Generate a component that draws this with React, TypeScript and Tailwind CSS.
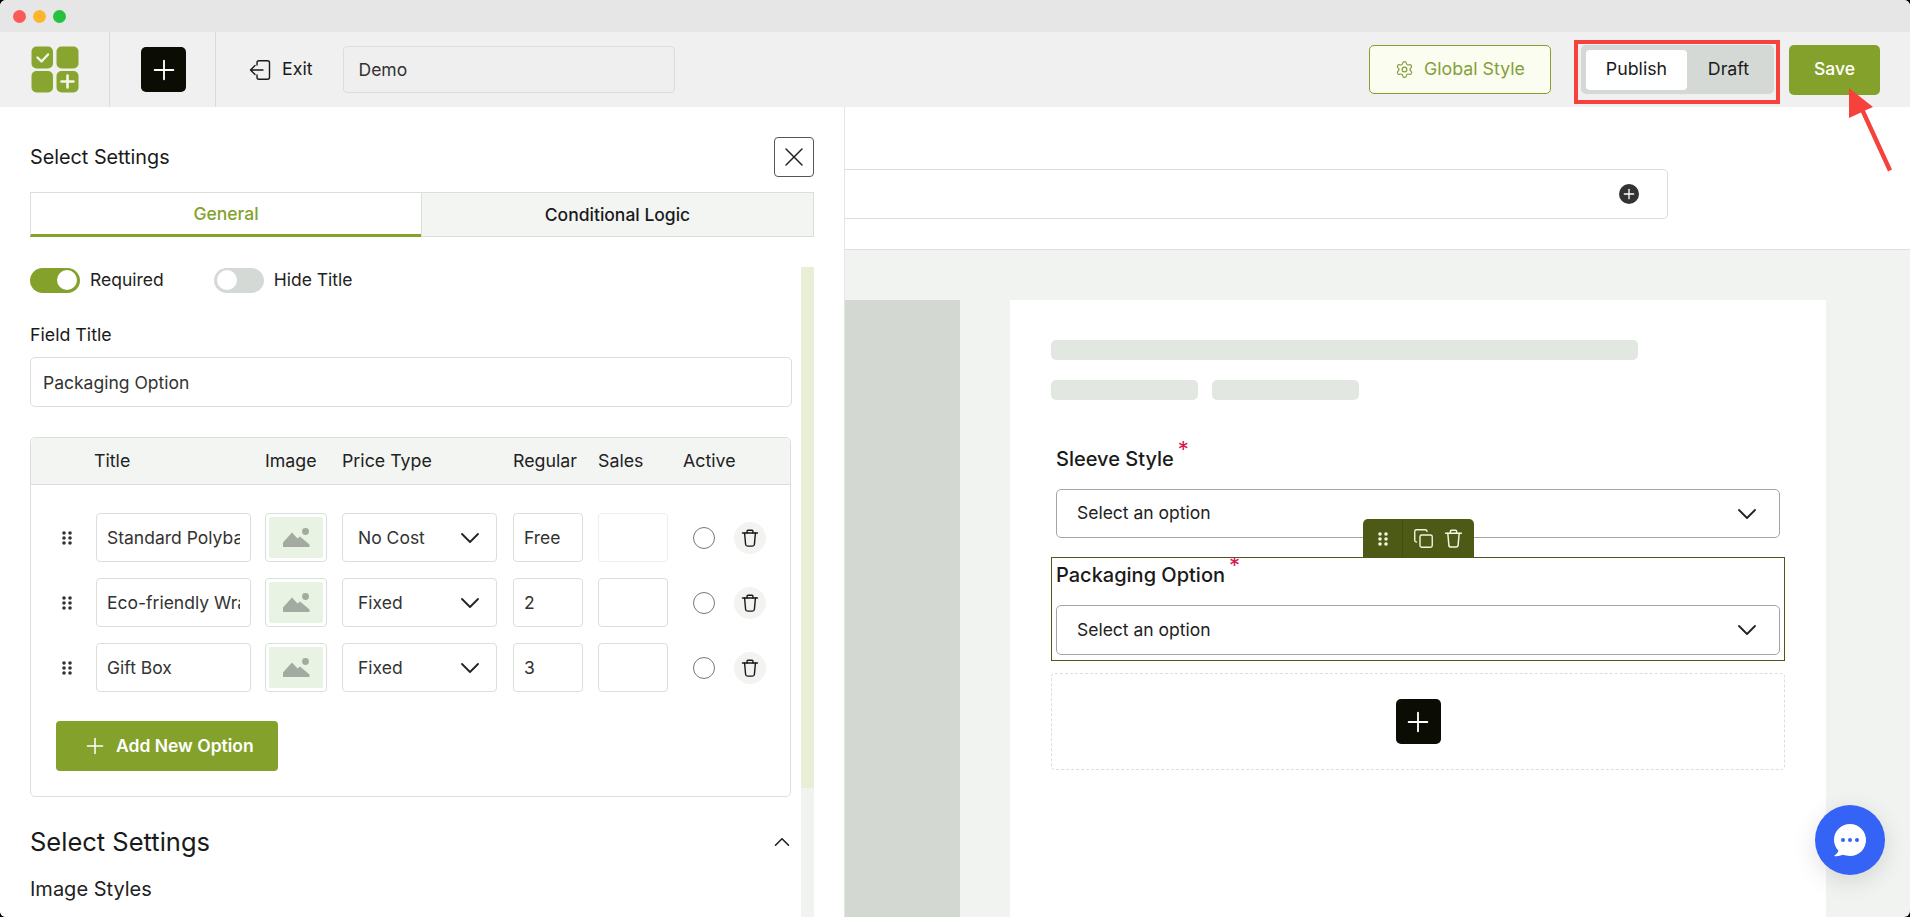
import React from "react";
import { Plus, X, Settings, Copy, ChevronUp } from "lucide-react";

const Chevron = () => (
  <svg width="18" height="10" viewBox="0 0 18 10" fill="none" stroke="#222" strokeWidth="1.8" strokeLinecap="round" strokeLinejoin="round">
    <path d="M1 1l8 8 8-8" />
  </svg>
);

const Grip = ({ color = "#333" }: { color?: string }) => (
  <svg width="10" height="14" viewBox="0 0 10 14" fill={color}>
    {[2, 8].map((x) =>
      [2, 7, 12].map((y) => <circle key={`${x}${y}`} cx={x} cy={y} r="1.8" />)
    )}
  </svg>
);

const Trash = ({ color = "#1a1a1a", size = 20 }: { color?: string; size?: number }) => (
  <svg width={size} height={size} viewBox="0 0 24 24" fill="none" stroke={color} strokeWidth="1.7" strokeLinecap="round" strokeLinejoin="round">
    <path d="M3 6h18" />
    <path d="M8.5 6V3.6a1 1 0 0 1 1-1h5a1 1 0 0 1 1 1V6" />
    <path d="M5.5 6l1.2 13.5a2.4 2.4 0 0 0 2.4 2.2h5.8a2.4 2.4 0 0 0 2.4-2.2L18.500 6" />
  </svg>
);

const ImagePh = () => (
  <svg width="27" height="20" viewBox="0 0 27 20" fill="#a3aba0">
    <circle cx="22.500" cy="3.500" r="3.400" />
    <path d="M0 19V14.500L9 4.500 14.500 10.500 17 8.500 26.500 16.500V19Z" />
  </svg>
);

const Logo = () => (
  <svg width="48" height="47" viewBox="0 0 48 47">
    <rect x="0.500" y="0.500" width="21.500" height="22" rx="5" fill="#88a52f" />
    <rect x="25.500" y="0.500" width="22" height="22" rx="5" fill="#88a52f" />
    <rect x="0.500" y="25" width="21.500" height="21.500" rx="5" fill="#88a52f" />
    <rect x="25.500" y="25" width="22" height="21.500" rx="5" fill="#88a52f" />
    <path d="M6.500 11.500l4 4 6.500-7" fill="none" stroke="#f4f6ea" strokeWidth="2.400" strokeLinecap="round" strokeLinejoin="round" />
    <path d="M36.500 29.500v12M30.500 35.500h12" fill="none" stroke="#f4f6ea" strokeWidth="2.600" strokeLinecap="round" />
  </svg>
);

const ExitIcon = () => (
  <svg width="22" height="22" viewBox="0 0 22 22" fill="none" stroke="#1a1a1a" strokeWidth="1.400" strokeLinecap="round" strokeLinejoin="round">
    <path d="M8 6V3.800A2 2 0 0 1 10 1.800H18.500A2 2 0 0 1 20.500 3.800V18.200A2 2 0 0 1 18.500 20.200H10A2 2 0 0 1 8 18.200V16" />
    <path d="M14 11H1.500M6 6.500L1.500 11 6 15.500" />
  </svg>
);

const BlackPlus = () => (
  <button className="flex h-[45px] w-[45px] items-center justify-center rounded-[5px] bg-[#0b0d05]">
    <Plus size={32} strokeWidth={1.4} color="#fff" />
  </button>
);

const Toggle = ({ on, label }: { on: boolean; label: string }) => (
  <div className="flex items-center gap-[10px]">
    <div className={on ? "flex h-[25px] w-[50px] items-center justify-end rounded-full bg-[#84a22b] pr-[3px]" : "flex h-[25px] w-[50px] items-center justify-start rounded-full bg-[#d5d9d5] pl-[3px]"}>
      <div className="h-[20px] w-[20px] rounded-full bg-white" />
    </div>
    <span className="text-[17.5px] text-[#222]">{label}</span>
  </div>
);

const rows = [
  { t: "Standard Polybag", p: "No Cost", r: "Free", faint: true, mt: "mt-0" },
  { t: "Eco-friendly Wrap", p: "Fixed", r: "2", faint: false, mt: "mt-[16px]" },
  { t: "Gift Box", p: "Fixed", r: "3", faint: false, mt: "mt-[16px]" },
];

const cols = "grid grid-cols-[65px_169px_77px_171px_85px_85px_1fr] items-center";
const box = "h-[49px] rounded-[4px] border border-[#dcdedc] bg-white outline-none text-[17.5px] text-[#333]";

const FieldLabel = ({ children }: { children: string }) => (
  <div className="flex h-[24px] items-start pl-[5px] text-[20px] font-medium leading-[24px] text-[#1a1a1a]">
    <span>{children}</span>
    <span className="ml-[4px] mt-[-10px] text-[22px] font-normal leading-[24px] text-[#d6174f]">*</span>
  </div>
);

const FakeSelect = ({ h }: { h: string }) => (
  <div className={`mx-[5px] flex ${h} items-center justify-between rounded-[5px] border border-[#a3a7a3] bg-white pl-[20px] pr-[23px] text-[17.5px] text-[#222]`}>
    <span>Select an option</span>
    <Chevron />
  </div>
);

export default function App() {
  return (
    <div className="h-[917px] w-[1910px] overflow-hidden bg-black">
      <div className="relative flex h-[917px] w-[1910px] flex-col overflow-hidden rounded-[6px] bg-[#f1f3f1] [font-family:Inter,sans-serif]">
        {/* title bar */}
        <div className="flex h-[32px] shrink-0 items-center gap-[7px] bg-[#e6e6e6] pl-[13px]">
          <span className="h-[13px] w-[13px] rounded-full bg-[#fb5b57]" />
          <span className="h-[13px] w-[13px] rounded-full bg-[#fdb52c]" />
          <span className="h-[13px] w-[13px] rounded-full bg-[#26c23f]" />
        </div>

        {/* header */}
        <div className="flex h-[75px] shrink-0 items-center bg-[#f0f0f0] pr-[30px]">
          <div className="flex h-full w-[110px] items-center justify-center border-r border-[#d9dbd9] pl-[1px]">
            <Logo />
          </div>
          <div className="flex h-full w-[106px] items-center justify-center border-r border-[#d9dbd9] pl-[2px]">
            <BlackPlus />
          </div>
          <div className="ml-[33px] flex items-center gap-[11px] text-[17.8px] text-[#1a1a1a]">
            <ExitIcon />
            <span>Exit</span>
          </div>
          <div className="ml-[30px] flex h-[47px] w-[332px] items-center rounded-[4px] border border-[#dcdedc] bg-[#efefef] pl-[15px] pt-[1px] text-[17.5px] text-[#333]">
            Demo
          </div>
          <button className="ml-auto flex h-[49px] w-[182px] items-center justify-center gap-[10px] rounded-[5px] border border-[#84a22b] bg-[#fbfdf0] text-[17.8px] text-[#84a03c]">
            <Settings size={19} strokeWidth={1.5} />
            Global Style
          </button>
          <div className="ml-[30px] flex h-[49px] w-[193px] items-center rounded-[5px] bg-[#d5d9d5] pl-[5px] text-[17.8px] text-[#1a1a1a]">
            <div className="flex h-[40px] w-[101px] items-center justify-center rounded-[4px] bg-white">Publish</div>
            <div className="flex flex-1 items-center justify-center pr-[4px]">Draft</div>
          </div>
          <button className="ml-[15px] flex h-[50px] w-[91px] items-center justify-center rounded-[5px] bg-[#84a22b] text-[17.5px] font-medium text-white">
            Save
          </button>
        </div>

        {/* main */}
        <div className="flex min-h-0 flex-1">
          {/* settings panel */}
          <div className="flex w-[845px] shrink-0 flex-col border-r border-[#e4e6e4] bg-white pl-[30px] pr-[30px]">
            <div className="flex items-center justify-between pt-[30px]">
              <h2 className="pt-[2px] text-[19.8px] text-[#1a1a1a]">Select Settings</h2>
              <button className="flex h-[40px] w-[40px] items-center justify-center rounded-[4px] border border-[#555] bg-white">
                <X size={32} strokeWidth={1.1} color="#222" />
              </button>
            </div>
            <div className="mt-[15px] flex h-[45px] text-[17.5px] font-medium">
              <div className="flex w-[391px] items-center justify-center border-b-[3px] border-l border-t border-[#dcdedc] border-b-[#84a22b] pt-[1px] text-[#84a22b]">
                General
              </div>
              <div className="flex w-[393px] items-center justify-center border border-[#dcdedc] bg-[#f3f5f3] pt-[1px] text-[#1a1a1a]">
                Conditional Logic
              </div>
            </div>

            <div className="mt-[30px] flex min-h-0 flex-1 gap-[10px]">
              <div className="w-[761px] shrink-0">
                <div className="flex gap-[50px]">
                  <Toggle on label="Required" />
                  <Toggle on={false} label="Hide Title" />
                </div>
                <div className="mt-[30px] text-[17.8px] leading-[24px] text-[#1a1a1a]">Field Title</div>
                <input
                  readOnly
                  defaultValue="Packaging Option"
                  className="mt-[10px] h-[50px] w-[762px] rounded-[5px] border border-[#dcdedc] pl-[12px] text-[17.5px] text-[#333] outline-none"
                />

                <div className="mt-[30px] rounded-[5px] border border-[#dcdedc]">
                  <div className={`${cols} h-[47px] rounded-t-[5px] border-b border-[#dcdedc] bg-[#f3f5f3] text-[17.8px] text-[#222]`}>
                    <span />
                    <span className="-ml-[2px]">Title</span>
                    <span>Image</span>
                    <span>Price Type</span>
                    <span>Regular</span>
                    <span>Sales</span>
                    <span>Active</span>
                  </div>
                  <div className="px-0 pb-[25px] pt-[28px]">
                    {rows.map((r) => (
                      <div key={r.t} className={`${cols} ${r.mt}`}>
                        <div className="flex justify-start pl-[31px]">
                          <Grip />
                        </div>
                        <input readOnly defaultValue={r.t} className={`${box} w-[155px] px-[10px]`} />
                        <div className={`${box} flex w-[62px] items-center justify-center p-[3px]`}>
                          <div className="flex h-full w-full items-center justify-center rounded-[2px] bg-[#e8f3e3]">
                            <ImagePh />
                          </div>
                        </div>
                        <div className={`${box} flex w-[155px] items-center justify-between pl-[15px] pr-[17px]`}>
                          <span>{r.p}</span>
                          <Chevron />
                        </div>
                        <input readOnly defaultValue={r.r} className={`${box} w-[70px] px-[10px]`} />
                        <div className={r.faint ? "h-[49px] w-[70px] rounded-[4px] border border-[#eeeeee]" : `${box} w-[70px]`} />
                        <div className="flex items-center">
                          <div className="ml-[10px] h-[22px] w-[22px] rounded-full border border-[#777]" />
                          <div className="ml-[19px] flex h-[32px] w-[32px] items-center justify-center rounded-full bg-[#f3f3f1]">
                            <Trash />
                          </div>
                        </div>
                      </div>
                    ))}
                    <button className="ml-[25px] mt-[29px] flex h-[50px] w-[222px] items-center rounded-[4px] bg-[#84a22b] pl-[26px] text-[17.5px] font-semibold text-white">
                      <Plus size={26} strokeWidth={1.4} />
                      <span className="ml-[8px]">Add New Option</span>
                    </button>
                  </div>
                </div>

                <div className="mt-[28px] flex items-center justify-between">
                  <h3 className="text-[25.5px] leading-[34px] text-[#1a1a1a]">Select Settings</h3>
                  <ChevronUp size={26} strokeWidth={1.5} color="#222" className="-mr-[4px]" />
                </div>
                <div className="mt-[15px] text-[20px] text-[#222]">Image Styles</div>
              </div>

              <div className="flex w-[13px] shrink-0 flex-col bg-[#f1f3f1]">
                <div className="h-[521px] w-full bg-[#e8efd6]" />
              </div>
            </div>
          </div>

          {/* canvas */}
          <div className="flex min-w-0 flex-1 flex-col">
            <div className="h-[143px] shrink-0 border-b border-[#dcdedc] bg-white pr-[242px] pt-[62px]">
              <div className="flex h-[50px] items-center justify-end rounded-r-[5px] border-b border-r border-t border-[#dcdedc] pr-[28px]">
                <div className="flex h-[20px] w-[20px] items-center justify-center rounded-full bg-[#333]">
                  <Plus size={16} strokeWidth={2} color="#fff" />
                </div>
              </div>
            </div>
            <div className="mt-[50px] flex min-h-0 flex-1 gap-[50px]">
              <div className="w-[115px] shrink-0 bg-[#d3d8d3]" />
              <div className="w-[816px] shrink-0 bg-white pl-[41px] pt-[40px]">
                <div className="h-[20px] w-[587px] rounded-[5px] bg-[#e2e7e2]" />
                <div className="mt-[20px] flex gap-[14px]">
                  <div className="h-[20px] w-[147px] rounded-[5px] bg-[#e2e7e2]" />
                  <div className="h-[20px] w-[147px] rounded-[5px] bg-[#e2e7e2]" />
                </div>
                <div className="w-[734px]">
                  <div className="mt-[47px]">
                    <FieldLabel>Sleeve Style</FieldLabel>
                  </div>
                  <div className="mt-[18px]">
                    <FakeSelect h="h-[49px]" />
                  </div>
                  <div className="relative mt-[19px] h-[104px] border border-[#4c5a16] pt-[5px]">
                    <div className="absolute bottom-full left-[311px] flex h-[39px] w-[111px] items-center rounded-t-[5px] bg-[#4c5a16]">
                      <div className="flex h-full w-[40px] items-center justify-center border-r border-[#414d12]">
                        <Grip color="#f3f5e0" />
                      </div>
                      <div className="flex flex-1 items-center justify-center gap-[9px]">
                        <Copy size={21} strokeWidth={1.6} color="#f3f5e0" />
                        <Trash color="#f3f5e0" size={21} />
                      </div>
                    </div>
                    <div className="-ml-px">
                      <FieldLabel>Packaging Option</FieldLabel>
                    </div>
                    <div className="-mx-px mt-[18px]">
                      <FakeSelect h="h-[50px]" />
                    </div>
                  </div>
                  <div className="mt-[12px] flex h-[97px] items-center justify-center rounded-[4px] border border-dashed border-[#dcdedc]">
                    <BlackPlus />
                  </div>
                </div>
              </div>
            </div>
          </div>
        </div>

        {/* annotation */}
        <div className="absolute left-[1574px] top-[40px] h-[64px] w-[206px] border-[4px] border-[#f6423c]" />
        <svg className="absolute left-[1840px] top-[80px]" width="60" height="100" viewBox="0 0 60 100" fill="#f6423c">
          <path d="M9 8L9 38 21 32.500 48 91.500 52 89.500 25 30.500 33 27Z" />
        </svg>

        {/* chat */}
        <div className="absolute left-[1815px] top-[805px] flex h-[70px] w-[70px] items-center justify-center rounded-full bg-[#3563f5] shadow-[0_6px_24px_rgba(0,0,0,0.12)]">
          <svg width="34" height="34" viewBox="0 0 34 34">
            <path d="M17 1C26 1 33 8 33 17S26 33 17 33C14.500 33 12.300 32.500 10 31.800 7 33 4 33.500 1 33 3 31.500 5 29.500 5.500 27.800 2.800 24.800 1 21 1 17 1 8 8 1 17 1Z" fill="#fff" />
            <circle cx="10" cy="17" r="2" fill="#3563f5" />
            <circle cx="17" cy="17" r="2" fill="#3563f5" />
            <circle cx="24" cy="17" r="2" fill="#3563f5" />
          </svg>
        </div>
      </div>
    </div>
  );
}
